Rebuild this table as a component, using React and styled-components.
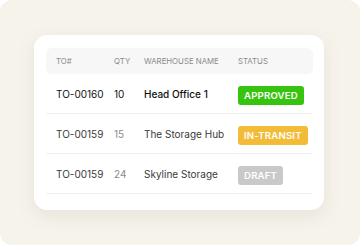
import styled, { createGlobalStyle } from "styled-components";

const GlobalStyle = createGlobalStyle`
  html, body {
    margin: 0;
    padding: 0;
    background: #ffffff;
  }
  body {
    font-family: Inter, "Noto Sans", sans-serif;
  }
`;

const rows = [
  { id: "TO-00160", qty: 10, name: "Head Office 1", status: "approved", active: true },
  { id: "TO-00159", qty: 15, name: "The Storage Hub", status: "transit" },
  { id: "TO-00159", qty: 24, name: "Skyline Storage", status: "draft" },
];

const statusLabels = {
  approved: "APPROVED",
  transit: "IN-TRANSIT",
  draft: "DRAFT",
};

const statusColors = {
  approved: "#37c40f",
  transit: "#f2bc38",
  draft: "#c9c9c9",
};

const App = () => {
  return (
    <>
      <GlobalStyle />
      <Backdrop>
        <Card>
          <HeaderRow>
            <HeadCell>TO#</HeadCell>
            <HeadCell>QTY</HeadCell>
            <HeadCell>Warehouse Name</HeadCell>
            <HeadCell>Status</HeadCell>
          </HeaderRow>
          {rows.map((row, i) => (
            <Row key={i}>
              <Cell $dark={row.active}>{row.id}</Cell>
              <Cell $dark={row.active} $muted={!row.active}>
                {row.qty}
              </Cell>
              <Cell $dark={row.active} $strong={row.active}>
                {row.name}
              </Cell>
              <div>
                <Badge $color={statusColors[row.status]}>
                  {statusLabels[row.status]}
                </Badge>
              </div>
            </Row>
          ))}
        </Card>
      </Backdrop>
    </>
  );
};

export default App;

const Backdrop = styled.div`
  width: 360px;
  height: 245px;
  box-sizing: border-box;
  background: #f6f3eb;
  border-radius: 12px;
  padding: 35px 0 0 34px;
`;

const Card = styled.div`
  width: 290px;
  height: 175px;
  box-sizing: border-box;
  background: #ffffff;
  border-radius: 13px;
  padding: 13px 11px 0 12px;
  box-shadow: 0 6px 18px rgba(140, 125, 90, 0.13);
`;

const Grid = styled.div`
  display: grid;
  grid-template-columns: 58px 30px 94px 1fr;
  align-items: center;
  padding-left: 10px;
`;

const HeaderRow = styled(Grid)`
  height: 26px;
  background: #f7f7f7;
  border-radius: 6px;
`;

const HeadCell = styled.div`
  font-size: 7.8px;
  text-transform: uppercase;
  color: #8b8b8b;
  white-space: nowrap;
`;

const Row = styled(Grid)`
  height: 40px;
  box-sizing: border-box;
  border-bottom: 1px solid #f1f1f1;
`;

const Cell = styled.div`
  font-size: 10px;
  color: ${(p) => (p.$muted ? "#8a8a8a" : p.$dark ? "#111111" : "#3a3a3a")};
  font-weight: ${(p) => (p.$strong ? 500 : 400)};
  white-space: nowrap;
`;

const Badge = styled.span`
  display: inline-flex;
  align-items: center;
  height: 19px;
  padding: 0 6px;
  border-radius: 3px;
  background: ${(p) => p.$color};
  color: #ffffff;
  font-size: 9.6px;
  font-weight: 600;
  letter-spacing: 0.2px;
  white-space: nowrap;
`;
